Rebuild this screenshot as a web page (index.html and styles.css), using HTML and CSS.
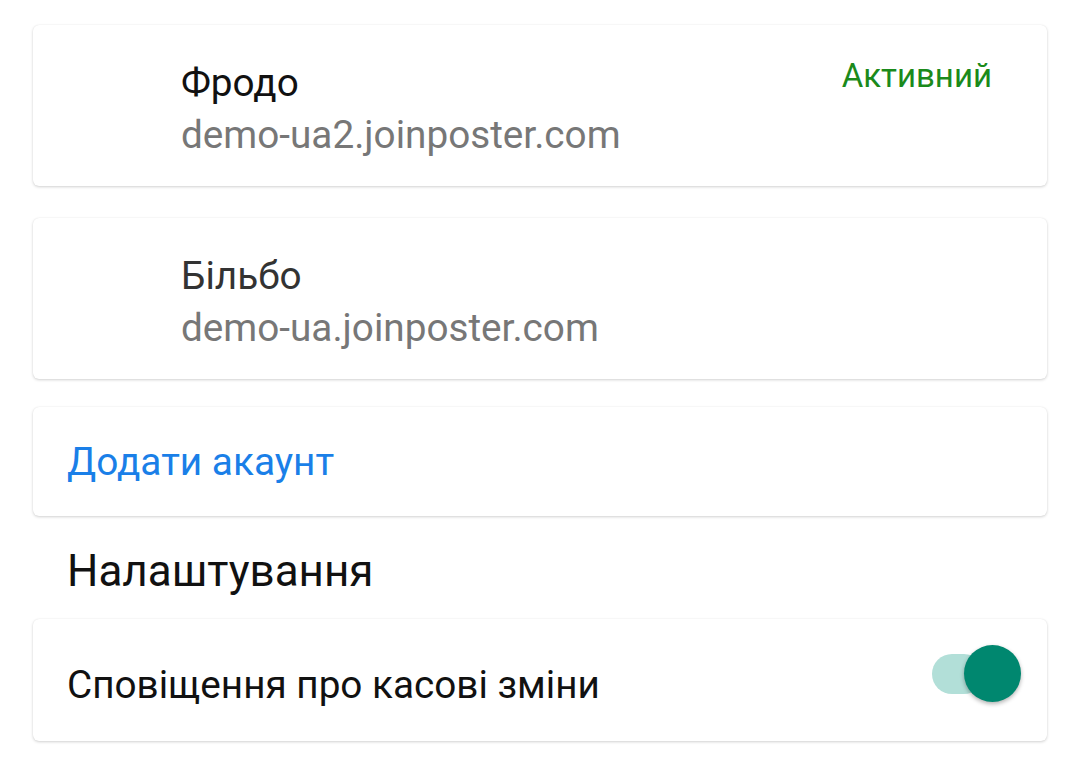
FILE: index.html
```html
<!DOCTYPE html>
<html lang="uk">
  <head>
    <meta charset="UTF-8" />
    <meta name="viewport" content="width=device-width, initial-scale=1.0" />
    <title>Акаунти</title>
    <link rel="stylesheet" href="styles.css">
  </head>
  <body>
    <div class="container">
      <div class="card account">
        <div class="account-info">
          <div class="account-name">Фродо</div>
          <div class="account-url">demo-ua2.joinposter.com</div>
        </div>
        <div class="account-status">Активний</div>
      </div>

      <div class="card account second">
        <div class="account-info">
          <div class="account-name">Більбо</div>
          <div class="account-url">demo-ua.joinposter.com</div>
        </div>
      </div>

      <div class="card add-account">
        <a href="#">Додати акаунт</a>
      </div>

      <h2 class="section-title">Налаштування</h2>

      <div class="card setting">
        <span class="setting-label">Сповіщення про касові зміни</span>
        <label class="switch">
          <input type="checkbox" checked />
          <span class="track"></span>
          <span class="knob"></span>
        </label>
      </div>
    </div>
  </body>
</html>
```

FILE: styles.css
```css
body {
  font-family: Roboto, "Noto Sans", sans-serif;
  margin: 0;
  padding: 0;
  background-color: white;
  color: #111;
}

.container {
  padding: 25px 33px;
  display: flex;
  flex-direction: column;
}

.card {
  background-color: white;
  border-radius: 6px;
  box-shadow: 0 1px 3px rgba(0, 0, 0, 0.18), 0 0 1px rgba(0, 0, 0, 0.08);
}

.account {
  height: 161px;
  box-sizing: border-box;
  padding: 0 55px 0 148px;
  display: flex;
  justify-content: space-between;
  align-items: flex-start;
}

.account.second {
  margin-top: 32px;
}

.account-info {
  display: flex;
  flex-direction: column;
  padding-top: 35px;
}

.account-name {
  font-size: 38.7px;
  line-height: 46px;
  color: #111;
}

.second .account-name {
  color: #333;
}

.account-url {
  font-size: 38.7px;
  line-height: 46px;
  margin-top: 6px;
  color: #777;
}

.account-status {
  font-size: 33px;
  line-height: 40px;
  padding-top: 31px;
  color: #1b8a1b;
}

.add-account {
  margin-top: 28px;
  height: 109px;
  box-sizing: border-box;
  padding: 0 34px;
  display: flex;
  align-items: center;
}

.add-account a {
  font-size: 38.8px;
  color: #1a7fe8;
  text-decoration: none;
}

.section-title {
  font-size: 44px;
  font-weight: normal;
  margin: 0;
  padding: 7px 34px 0;
  height: 103px;
  box-sizing: border-box;
  display: flex;
  align-items: center;
  color: #111;
}

.setting {
  height: 122px;
  box-sizing: border-box;
  padding: 0 26px 0 34px;
  display: flex;
  justify-content: space-between;
  align-items: center;
  font-size: 38.7px;
  color: #111;
}

.setting-label {
  padding-top: 8px;
}

.switch {
  position: relative;
  width: 89px;
  height: 57px;
  margin-bottom: 13px;
  display: flex;
  align-items: center;
}

.switch input {
  display: none;
}

.track {
  width: 52px;
  height: 40px;
  border-radius: 20px;
  background-color: #b2dfd8;
}

.knob {
  position: absolute;
  right: 0;
  top: 0;
  width: 57px;
  height: 57px;
  border-radius: 50%;
  background-color: #00876f;
  box-shadow: 0 2px 4px rgba(0, 0, 0, 0.3);
}
```
